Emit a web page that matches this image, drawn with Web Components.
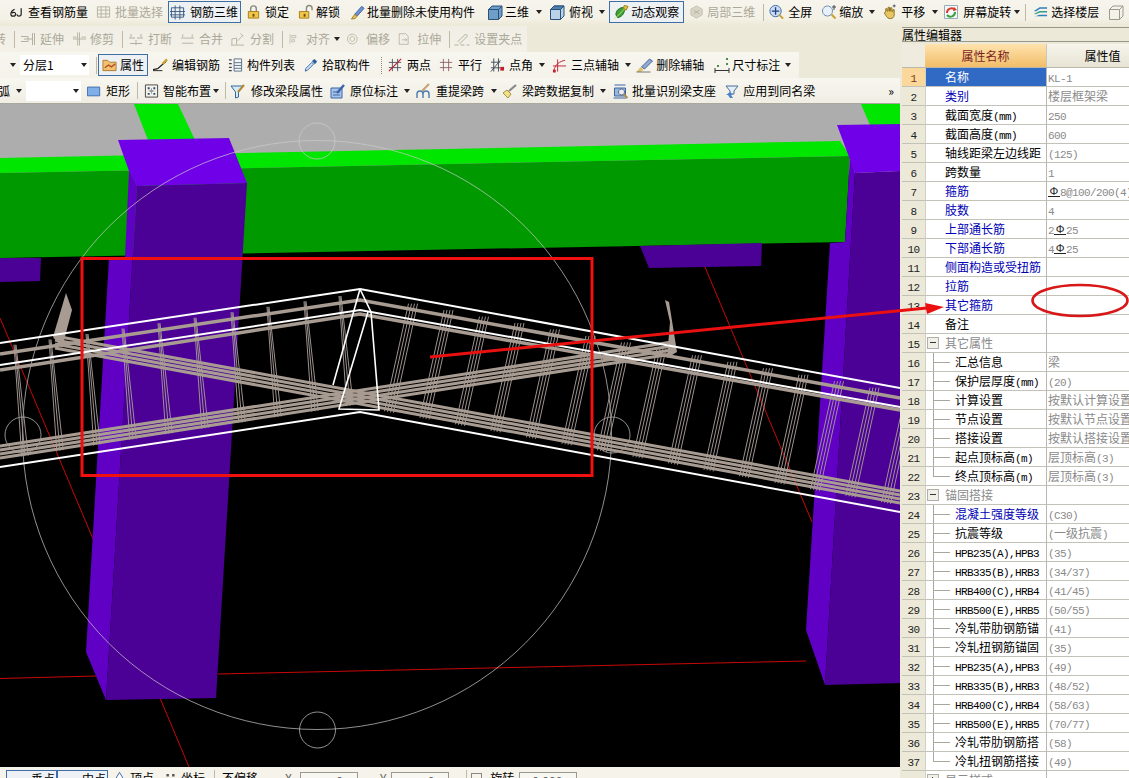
<!DOCTYPE html>
<html lang="zh">
<head>
<meta charset="utf-8">
<title>钢筋三维</title>
<style>
html, body { margin: 0; height: 100%; overflow: hidden; background: #ece9d8; }
body { font: 12px "Noto Sans CJK SC", "Liberation Sans", sans-serif; color: #000; }
</style>
</head>
<body>
<cad-app>
    <cad-toolbar slot="top" style="height:26px;padding-bottom:2px">
        <tool-btn icon="look" m="9" gap="4">查看钢筋量</tool-btn>
        <tool-btn icon="gridg" m="8" gap="4" disabled>批量选择</tool-btn>
        <tool-btn icon="bars3d" m="5" pl="2" pr="3" gap="5" active>钢筋三维</tool-btn>
        <tool-btn icon="lock" m="5" gap="4">锁定</tool-btn>
        <tool-btn icon="unlock" m="9" gap="3">解锁</tool-btn>
        <tool-btn icon="brush" m="10" gap="2">批量删除未使用构件</tool-btn>
        <tool-btn icon="cube" m="12" iw="16" gap="2" arrow="7">三维</tool-btn>
        <tool-btn icon="cubew" m="7" iw="16" gap="4" arrow="6">俯视</tool-btn>
        <tool-btn icon="orbit" m="4" pl="5" pr="5" gap="2" active>动态观察</tool-btn>
        <tool-btn icon="localg" m="5" gap="3" disabled>局部三维</tool-btn>
        <tool-sep m="8"></tool-sep>
        <tool-btn icon="full" m="5" gap="4">全屏</tool-btn>
        <tool-btn icon="zoom" m="9" iw="16" gap="2" arrow="6">缩放</tool-btn>
        <tool-btn icon="pan" m="7" gap="4" arrow="7">平移</tool-btn>
        <tool-btn icon="rotate" m="5" iw="16" gap="4" arrow="3">屏幕旋转</tool-btn>
        <tool-sep m="5"></tool-sep>
        <tool-btn icon="floors" m="7" gap="3">选择楼层</tool-btn>
        <tool-btn icon="cubeg" m="9" iw="16"></tool-btn>
    </cad-toolbar>

    <cad-toolbar slot="bars" class="bar2" style="height:26px">
        <tool-btn m="-6" disabled>转</tool-btn>
        <tool-sep m="8"></tool-sep>
        <tool-btn icon="extend" m="5" iw="16" gap="4" disabled>延伸</tool-btn>
        <tool-btn icon="trim" m="8" gap="3" disabled>修剪</tool-btn>
        <tool-sep m="8"></tool-sep>
        <tool-btn icon="cut" m="5" iw="16" gap="4" disabled>打断</tool-btn>
        <tool-btn icon="merge" m="8" gap="4" disabled>合并</tool-btn>
        <tool-btn icon="split" m="7" gap="5" disabled>分割</tool-btn>
        <tool-sep m="8"></tool-sep>
        <tool-btn icon="align" m="6" iw="11" gap="6" arrow="4" disabled>对齐</tool-btn>
        <tool-btn icon="offset" m="7" iw="13" gap="6" disabled>偏移</tool-btn>
        <tool-btn icon="stretch" m="8" iw="13" gap="6" disabled>拉伸</tool-btn>
        <tool-sep m="8"></tool-sep>
        <tool-btn icon="grip" m="3" iw="17" gap="4" disabled>设置夹点</tool-btn>
    </cad-toolbar>

    <cad-toolbar slot="bars" class="bar3" style="height:26px">
        <tool-arrow m="10"></tool-arrow>
        <cad-combo m="4" w="69">分层1</cad-combo>
        <tool-sep m="7"></tool-sep>
        <tool-btn icon="prop" m="1" pl="4" pr="4" gap="3" active>属性</tool-btn>
        <tool-btn icon="edit" m="5" gap="4">编辑钢筋</tool-btn>
        <tool-btn icon="list" m="8" gap="4">构件列表</tool-btn>
        <tool-btn icon="picker" m="9" iw="14" gap="4">拾取构件</tool-btn>
        <tool-sep m="11" dotted></tool-sep>
        <tool-btn icon="twopt" m="6" iw="14" gap="5">两点</tool-btn>
        <tool-btn icon="para" m="8" iw="14" gap="5">平行</tool-btn>
        <tool-btn icon="angle" m="8" gap="4" arrow="6">点角</tool-btn>
        <tool-btn icon="three" m="7" gap="4" arrow="6">三点辅轴</tool-btn>
        <tool-btn icon="delaxis" m="5" iw="17" gap="3">删除辅轴</tool-btn>
        <tool-btn icon="dim" m="9" iw="18" gap="1" arrow="5">尺寸标注</tool-btn>
    </cad-toolbar>

    <cad-toolbar slot="bars" class="bar4" style="height:26px">
        <tool-btn m="-2">弧</tool-btn>
        <tool-arrow m="6"></tool-arrow>
        <cad-combo m="4" w="55"></cad-combo>
        <tool-btn icon="rect" m="6" iw="14" gap="5">矩形</tool-btn>
        <tool-sep m="7"></tool-sep>
        <tool-btn icon="smart" m="6" gap="4" arrow="2">智能布置</tool-btn>
        <tool-sep m="6"></tool-sep>
        <tool-btn icon="funnel" m="4" iw="16" gap="5">修改梁段属性</tool-btn>
        <tool-btn icon="mark" m="7" iw="16" gap="4" arrow="6">原位标注</tool-btn>
        <tool-btn icon="lift" m="6" iw="16" gap="4" arrow="7">重提梁跨</tool-btn>
        <tool-btn icon="broom" m="5" iw="16" gap="4" arrow="6">梁跨数据复制</tool-btn>
        <tool-btn icon="batch" m="6" iw="17" gap="3">批量识别梁支座</tool-btn>
        <tool-btn icon="apply" m="7" iw="18" gap="2">应用到同名梁</tool-btn>
        <tool-btn m="auto" style="padding-right:6px">»</tool-btn>
    </cad-toolbar>

    <cad-viewport slot="view"></cad-viewport>
    <cad-statusbar slot="status"></cad-statusbar>

    <prop-panel slot="panel" title="属性编辑器">
        <prop-row n="1" kind="sel" name="名称" value="KL-1"></prop-row>
        <prop-row n="2" kind="link" name="类别" value="楼层框架梁"></prop-row>
        <prop-row n="3" name="截面宽度(mm)" value="250"></prop-row>
        <prop-row n="4" name="截面高度(mm)" value="600"></prop-row>
        <prop-row n="5" name="轴线距梁左边线距" value="(125)"></prop-row>
        <prop-row n="6" name="跨数量" value="1"></prop-row>
        <prop-row n="7" kind="link" name="箍筋" value="#8@100/200(4)"></prop-row>
        <prop-row n="8" kind="link" name="肢数" value="4"></prop-row>
        <prop-row n="9" kind="link" name="上部通长筋" value="2#25"></prop-row>
        <prop-row n="10" kind="link" name="下部通长筋" value="4#25"></prop-row>
        <prop-row n="11" kind="link" name="侧面构造或受扭筋"></prop-row>
        <prop-row n="12" kind="link" name="拉筋"></prop-row>
        <prop-row n="13" kind="link" name="其它箍筋"></prop-row>
        <prop-row n="14" name="备注"></prop-row>
        <prop-row n="15" kind="group" name="其它属性"></prop-row>
        <prop-row n="16" kind="sub" name="汇总信息" value="梁"></prop-row>
        <prop-row n="17" kind="sub" name="保护层厚度(mm)" value="(20)"></prop-row>
        <prop-row n="18" kind="sub" name="计算设置" value="按默认计算设置"></prop-row>
        <prop-row n="19" kind="sub" name="节点设置" value="按默认节点设置"></prop-row>
        <prop-row n="20" kind="sub" name="搭接设置" value="按默认搭接设置"></prop-row>
        <prop-row n="21" kind="sub" name="起点顶标高(m)" value="层顶标高(3)"></prop-row>
        <prop-row n="22" kind="sub last" name="终点顶标高(m)" value="层顶标高(3)"></prop-row>
        <prop-row n="23" kind="group" name="锚固搭接"></prop-row>
        <prop-row n="24" kind="sub link" name="混凝土强度等级" value="(C30)"></prop-row>
        <prop-row n="25" kind="sub" name="抗震等级" value="(一级抗震)"></prop-row>
        <prop-row n="26" kind="sub" name="HPB235(A),HPB3" value="(35)"></prop-row>
        <prop-row n="27" kind="sub" name="HRB335(B),HRB3" value="(34/37)"></prop-row>
        <prop-row n="28" kind="sub" name="HRB400(C),HRB4" value="(41/45)"></prop-row>
        <prop-row n="29" kind="sub" name="HRB500(E),HRB5" value="(50/55)"></prop-row>
        <prop-row n="30" kind="sub" name="冷轧带肋钢筋锚" value="(41)"></prop-row>
        <prop-row n="31" kind="sub" name="冷轧扭钢筋锚固" value="(35)"></prop-row>
        <prop-row n="32" kind="sub" name="HPB235(A),HPB3" value="(49)"></prop-row>
        <prop-row n="33" kind="sub" name="HRB335(B),HRB3" value="(48/52)"></prop-row>
        <prop-row n="34" kind="sub" name="HRB400(C),HRB4" value="(58/63)"></prop-row>
        <prop-row n="35" kind="sub" name="HRB500(E),HRB5" value="(70/77)"></prop-row>
        <prop-row n="36" kind="sub" name="冷轧带肋钢筋搭" value="(58)"></prop-row>
        <prop-row n="37" kind="sub last" name="冷轧扭钢筋搭接" value="(49)"></prop-row>
        <prop-row n="38" kind="group closed" name="显示样式"></prop-row>
    </prop-panel>
</cad-app>

<script>
// toolbar icons, 16x16
const g = (d) => `<path d="${d}" fill="none" stroke="#b5b1a1"/>`;
const s = (d, c = '#333', w = 1) => `<path d="${d}" fill="none" stroke="${c}" stroke-width="${w}"/>`;
const f = (d, c, o = 'none') => `<path d="${d}" fill="${c}" stroke="${o}"/>`;
const ICONS = {
    look: s('M6 5C4 6 2 8 2 10s1 2.500 2.500 2.500 2.500-1 2.500-2.500S5.500 8 3 9M13 4v6.500c0 1.500-1 2-2.500 2s-2-1-2-2', '#222', 1.3),
    gridg: g('M1.500 2.500h13v11h-13zM1.500 6h13M1.500 10h13M5.500 2.500v11M10.500 2.500v11'),
    bars3d: s('M1.500 3.500h13v10h-13zM0 7.500h16M0 11h16M5.500 1v15M10.500 1v15', '#3a5a80'),
    lock: s('M5 7V4.500a3 3 0 0 1 6 0V7', '#8a8a80', 1.5) + f('M2.500 7.500h11v7h-11z', '#f2c64a', '#a37d18') + f('M7 10h2v3H7z', '#6a4a08'),
    unlock: s('M9 7V4a3 3 0 0 1 6 0v2', '#8a8a80', 1.5) + f('M1.500 7.500h10v7h-10z', '#f2c64a', '#a37d18') + f('M6 10h2v3H6z', '#6a4a08'),
    brush: f('M5 10.500L12.500 2l2.500 2-7.500 8.500z', '#6f92d6', '#3d5f9e') + f('M5 10.500l2.500 2-2 2.500-4 .5z', '#e8c24a', '#9a8030'),
    cube: f('M1.500 5.500L5 2h10v10l-3.500 3.500h-10z', '#6f9fc8', '#2a5078') + s('M1.500 5.500h10v10M11.500 5.500L15 2', '#2a5078'),
    cubew: f('M1.500 5.500L5 2h10v10l-3.500 3.500h-10z', '#b9d2e8', '#2a5078') + f('M1.500 5.500L5 2h10l-3.500 3.500z', '#4f7fae', '#2a5078') + s('M11.500 5.500v10', '#2a5078'),
    orbit: f('M2 11C2 6 6 3 11 3c1 4-1 10-7 11z', '#3ca03a', '#1f6a1f') + f('M11 1l4 1-2 4-3-2z', '#e6c22e', '#9a8020') + s('M1 15L11 5', '#c9e65a'),
    localg: f('M8 1.500l6 3.500v6l-6 3.500L2 11V5z', '#d9d6c8', '#c2bfb0') + g('M5 6l6 4M11 6l-6 4'),
    full: f('M7 1a6 6 0 1 1-.01 0z', '#cbdcf2', '#3a66a8') + s('M7 3v8M3 7h8', '#1f3f80', 1.4) + s('M11 11l4 4', '#c9a02c', 2),
    zoom: f('M6.500 2a5 5 0 1 1-.01 0z', '#e8f0fa', '#6c8cb4') + s('M10.500 10.500l4 4', '#c9a02c', 2) + s('M13 1v5M11 3h4', '#445'),
    pan: f('M4 8V4.500h1.500V7h1V3H8v4h1V3.500h1.500V7.500h1V5.500H13V11c0 2.500-1.500 4-4 4s-3.500-1-5-3.500L2.500 9l1-1z', '#e8c662', '#8c7020') + s('M13 0v3M11.500 1.500h3', '#445'),
    rotate: f('M1.500 1.500h13v13h-13z', '#f4f6fa', '#9ab') + s('M4 9a4.500 4.500 0 0 1 8-3', '#d83a2a', 2) + s('M12 8a4.500 4.500 0 0 1-8 3', '#3ca03a', 2) + f('M11 3l3 3-4 1z', '#d83a2a'),
    floors: f('M1 7l6-4h8v1.500H7.500L3 7.500z', '#2f7fc0') + f('M1 10l6-3h8v1.500H7.500L3 10.500z', '#2f9f8a') + f('M1 13l6-2h8v1.500H3z', '#2f7fc0'),
    cubeg: s('M1.500 5.500L5 2h10v10l-3.500 3.500h-10zM1.500 5.500h10v10M11.500 5.500L15 2', '#9a9a90'),
    extend: g('M1 5.500h7v5H1M4 8h8M14.500 2v12M12.500 2v12'),
    trim: g('M8 1v14M6 1v14M1 8h14M1 6h4M10 6h5'),
    cut: g('M1 7h6M9 7h6M2 12.500h12M3 3v3M13 3v3M8 9v5'),
    merge: g('M1 7h14M2 12.500h12M3 3v3M13 3v3'),
    split: g('M1 14.500h14M2 14V8l5-1v7M8 10l6-6M11 2l3 3'),
    align: g('M1.500 1v14M4 3h6v3H4zM4 9h4v3H4z'),
    offset: g('M6.500 2a6 6 0 1 1-.01 0zM6.500 5a3 3 0 1 1-.01 0z'),
    stretch: g('M1.500 1.500h8l3 3v10h-11zM5 9h6M9 7l2 2-2 2'),
    grip: g('M1 14h4M7 14h4M13 14h3M4 11l8-8 2 2-8 8'),
    prop: f('M1 3h5l2 2h7v9H1z', '#f2c070', '#a87c30') + s('M3 11l4-3 3 2 4-3', '#b04a20', 1.4),
    edit: s('M0 13l5-1 9-8', '#222', 1.4) + s('M10 7l5-5', '#c9a02c', 2.4) + s('M0 14h10', '#222'),
    list: s('M1 2.500h3M1 6.500h3M1 10.500h3M1 14h3', '#444', 1.3) + f('M6.500 1.500h8v13h-8z', '#f6f6f2', '#55708c') + s('M6.500 5.500h8M6.500 8.500h8M6.500 11.500h8', '#55708c'),
    picker: f('M2 12L9 5l2 2-7 7-2.500 1z', '#cfe2f6', '#2e5ea0') + f('M9 3.500L12 1l3 3-2.500 3z', '#2e5ea0'),
    twopt: s('M1 5h14M1 11h14M5 1v14M11 1v14', '#404a58') + s('M1 15L15 1', '#c02030', 1.4),
    para: s('M1 5h14M1 11h14M5 1v14M11 1v14', '#8a5a60'),
    angle: s('M1 5h10M1 11h10M4 1v14M9 1v14M1 15L11 3', '#404a58') + f('M11 10h4v4h-4z', '#c02030'),
    three: s('M1 9h14M6 2v13', '#c02030') + s('M2 14C3 8 8 4 14 3', '#c02030') + f('M1 13h3v3H1z', '#c02030'),
    delaxis: f('M5 10L13 2l3 2-8 8z', '#8fa8d4', '#4a6a9e') + f('M4 10l3 3-3 2H0z', '#e0c060') + s('M0 15h14', '#777'),
    dim: s('M1 11v5M15 11v5M1 13.500h14', '#333') + f('M3 8h2v2H3zM12 1h2v2h-2zM12 6h2v2h-2z', '#4a8a4a'),
    rect: f('M.5 3.500h14v10H.5z', '#7faee8', '#3a64a8'),
    smart: s('M1.500 1.500h13v13h-13z', '#444') + f('M4 4h2v2H4zM10 4h2v2h-2zM4 10h2v2H4zM10 10h2v2h-2zM7 7h2v2H7z', '#2b4a7a') + s('M5 8h6M8 5v6', '#999'),
    funnel: f('M1 3h12L8.500 9v5l-3 1V9z', '#dce8f4', '#2e6aa0') + s('M8 9l6-7', '#b08a30', 2),
    mark: f('M1 5h11v10H1z', '#a8c4ea', '#3a64a8') + s('M3 9h7M3 12h7', '#3a64a8') + s('M7 10l7-8', '#3a64a8', 2.4),
    lift: s('M1 15v-4a3 3 0 0 1 6 0v4M7 15v-4a3 3 0 0 1 6 0v4', '#4a7ab0', 1.4) + s('M6 8l7-7', '#c8a070', 2),
    broom: f('M1 10l4-3 4 4-3 4z', '#f2e08a', '#a8923a') + s('M7 8l7-6', '#888', 2.2),
    batch: f('M2 5h11v8H2z', '#9ab8d8', '#3a64a8') + s('M2 2h11M1 15h13', '#3a64a8') + f('M9 6a3 3 0 1 1-.01 0z', '#e8eef8', '#667') + s('M11 11l4 4', '#a89050', 2),
    apply: f('M2 3h12l-4 5v3H6V8z', '#e4eef8', '#4a6f9a') + f('M6 9l3 3h-2l2 3h-3l-2-3H2z', '#4a80c8')
};

const ico = (name, w) => `<svg width="${w}" height="16" viewBox="0 0 16 16" preserveAspectRatio="xMidYMid meet">${ICONS[name] || ''}</svg>`;
const caret = `<span class="caret"></span>`;

class CadApp extends HTMLElement {
    connectedCallback() {
        this.attachShadow({ mode: 'open' });
        this.shadowRoot.innerHTML = `
            <style>
                :host { display: block; position: relative; width: 1129px; height: 778px; overflow: hidden; background: #ece9d8; }
                .main { display: flex; height: 752px; }
                .left { display: flex; flex-direction: column; width: 900px; flex: none; }
                svg { position: absolute; left: 0; top: 0; pointer-events: none; }
            </style>
            <slot name="top"></slot>
            <div class="main">
                <div class="left">
                    <slot name="bars"></slot>
                    <slot name="view"></slot>
                    <slot name="status"></slot>
                </div>
                <slot name="panel"></slot>
            </div>
            <svg width="1129" height="778">
                <path d="M430 357L927 308" stroke="#ea1010" stroke-width="3" fill="none"/>
                <path d="M944 307L925 303L927 314z" fill="#ea1010"/>
                <ellipse cx="1080" cy="300.500" rx="47.500" ry="15.500" fill="none" stroke="#d81818" stroke-width="2.600"/>
            </svg>
        `;
    }
}

class CadToolbar extends HTMLElement {
    connectedCallback() {
        this.attachShadow({ mode: 'open' });
        this.shadowRoot.innerHTML = `
            <style>
                :host { display: flex; align-items: center; box-sizing: border-box; flex: none; white-space: nowrap; overflow: hidden;
                    background: linear-gradient(#f6f4ec, #f4f1e6 70%, #ece9d8); }
                :host(.bar2) { width: 527px; background: linear-gradient(#f1efe5, #f3f1e8); }
                :host(.bar3) { width: 799px; background: linear-gradient(#f7f6ef, #f4f2e9); }
                :host(.bar4) { border-bottom: 1px solid #a9a89f; background: linear-gradient(#f7f6f0, #f0eee3); }
            </style>
            <slot></slot>
        `;
    }
}

class ToolBtn extends HTMLElement {
    connectedCallback() {
        this.attachShadow({ mode: 'open' });
        const iw = this.getAttribute('iw') || 15;
        const icon = this.getAttribute('icon');
        const m = this.getAttribute('m') || 0;
        const active = this.hasAttribute('active');
        this.style.marginLeft = m === 'auto' ? 'auto' : m + 'px';
        this.shadowRoot.innerHTML = `
            <style>
                :host { display: inline-flex; align-items: center; flex: none; line-height: 16px; }
                :host([disabled]) { color: #aca899; }
                .b { display: inline-flex; align-items: center; box-sizing: border-box; }
                :host([active]) .b { height: 22px; border: 1px solid #3d6ea8; background: #eef1f4; }
                svg { display: block; flex: none; }
                .t { margin-left: ${icon ? (this.getAttribute('gap') || 0) : 0}px; }
                .caret { width: 0; height: 0; border: 3px solid transparent; border-top: 4px solid #222; border-bottom: 0; margin-left: ${this.getAttribute('arrow')}px; }
            </style>
            <span class="b" style="${active ? `padding:0 ${this.getAttribute('pr') - 1}px 0 ${this.getAttribute('pl') - 1}px` : ''}">
                ${icon ? ico(icon, iw) : ''}<span class="t"><slot></slot></span>
            </span>${this.hasAttribute('arrow') ? caret : ''}
        `;
    }
}

class ToolArrow extends HTMLElement {
    connectedCallback() {
        this.attachShadow({ mode: 'open' });
        this.style.marginLeft = (this.getAttribute('m') || 0) + 'px';
        this.shadowRoot.innerHTML = `
            <style>
                :host { display: block; flex: none; width: 0; height: 0; border: 3px solid transparent; border-top: 4px solid #222; border-bottom: 0; }
            </style>
        `;
    }
}

class ToolSep extends HTMLElement {
    connectedCallback() {
        this.attachShadow({ mode: 'open' });
        this.style.marginLeft = (this.getAttribute('m') || 0) + 'px';
        this.shadowRoot.innerHTML = `
            <style>
                :host { display: block; flex: none; width: 1px; height: 17px; background: #bdbaa8; }
                :host([dotted]) { background: none; border-left: 1px dotted #8e8c80; box-sizing: border-box; }
            </style>
        `;
    }
}

class CadCombo extends HTMLElement {
    connectedCallback() {
        this.attachShadow({ mode: 'open' });
        this.style.marginLeft = (this.getAttribute('m') || 0) + 'px';
        this.style.width = this.getAttribute('w') + 'px';
        this.shadowRoot.innerHTML = `
            <style>
                :host { display: flex; align-items: center; flex: none; box-sizing: border-box; height: 20px; padding: 0 2px 0 3px; background: #fff; }
                .t { flex: 1; line-height: 16px; }
                .caret { width: 0; height: 0; border: 3px solid transparent; border-top: 4px solid #222; border-bottom: 0; }
            </style>
            <span class="t"><slot></slot></span>${caret}
        `;
    }
}

// the model view: columns, beam and the rebar cage, drawn in screen coordinates
class CadViewport extends HTMLElement {
    connectedCallback() {
        this.attachShadow({ mode: 'open' });
        const bar = '#a89c92';
        const tie = '#9d928f';
        const ln = (x1, y1, x2, y2, c, w) => `<line x1="${x1}" y1="${y1}" x2="${x2}" y2="${y2}" stroke="${c}" stroke-width="${w}"/>`;
        let cage = '';

        // stirrups left of the peak
        for (const x of [15, 50, 87, 123, 159, 195, 232, 268, 305, 340]) {
            const ty = 354 - 0.15 * x - 7;
            for (const o of [-2, 0, 2]) {
                const xb = x + 10 + o * 1.6;
                cage += ln(x + o * 0.5, ty, xb, 452 - 0.155 * xb + 8, tie, 1);
            }
        }
        // stirrups right of the peak
        for (let x = 413; x < 930; x += 35.500) {
            const ty = 300 + 0.182 * (x - 360) - 6;
            for (const o of [-4.500, -1.500, 1.500, 4.500]) {
                const xb = x - 24 + o;
                cage += ln(x + o, ty, xb, 342 + 0.183 * (xb - 55) + 9, tie, 1);
            }
        }
        // bottom bar bundles, crossing at the peak
        for (const o of [-6, -2, 2, 6]) {
            cage += ln(0, 452 + o, 672, 348 + o, bar, 3);
            cage += ln(55, 342 + o, 900, 497 + o, bar, 3);
        }
        // top bars and hooks
        cage += `<polyline points="0,354 360,300 900,398" fill="none" stroke="${bar}" stroke-width="3.500"/>`;
        cage += `<polyline points="0,370 360,314 900,410" fill="none" stroke="${bar}" stroke-width="3.500"/>`;
        cage += `<path d="M66 293L72 310 62 348 53 337z" fill="${bar}"/><path d="M665 300L669 302 677 352 667 358 670 322z" fill="${bar}"/>`;
        // white wireframe of the beam
        cage += `<g fill="none" stroke="#fff" stroke-width="2">
            <polyline points="0,343 360,289 900,388"/>
            <polyline points="0,365 360,310 900,407"/>
            <polyline points="0,467 360,412 900,512"/>
            <path stroke-width="1.600" d="M360 289L333 385M360 289L371 312 379 410 339 409 368 312"/>
        </g>`;

        this.shadowRoot.innerHTML = `
            <style>
                :host { display: block; flex: 1; min-height: 0; background: #000; overflow: hidden; }
                svg { display: block; }
            </style>
            <svg width="900" height="663" viewBox="0 104 900 663">
                <rect x="0" y="104" width="900" height="70" fill="#adadad"/>
                <path d="M134 104H178L195 140H148z" fill="#00e600"/>
                <path d="M861 104H900V125H870z" fill="#00e600"/>
                <path d="M0 158L840 141 850 156 0 173z" fill="#00e600"/>
                <path d="M0 173L850 156 845 242 0 258z" fill="#009900"/>
                <path d="M0 258H41L40 281 0 282z" fill="#4b0096"/>
                <path d="M640 246L762 243 761 266 649 268z" fill="#4b0096"/>

                <g fill="none" stroke="#c80808" stroke-width="1">
                    <path d="M0 318L189 767"/>
                    <path d="M705 267L812 522"/>
                    <path d="M0 678.500L96 676M218 674L806 661"/>
                </g>

                <path d="M129 171L137 186 106 700 86 652 109 258 125 258z" fill="#5f00c4"/>
                <path d="M137 186L247 183 216 698 106 700z" fill="#4b0096"/>
                <path d="M118 140L229 138 247 183 137 186 129 171z" fill="#7000e8"/>

                <path d="M850 156L855 173 825 685 806 630 830 243 845 242z" fill="#5f00c4"/>
                <path d="M855 173L900 171V683L825 685z" fill="#4b0096"/>
                <path d="M837 125L900 124V171L855 173z" fill="#7000e8"/>

                <g fill="none" stroke="#ccc" stroke-opacity=".7" stroke-width="1">
                    <circle cx="317" cy="435" r="294.500"/>
                    <circle cx="317" cy="141" r="18"/>
                    <circle cx="317.500" cy="730" r="18"/>
                    <circle cx="23" cy="435" r="18"/>
                    <circle cx="612" cy="435" r="18"/>
                </g>

                ${cage}

                <rect x="82" y="258.500" width="510" height="217" fill="none" stroke="#f01010" stroke-width="3"/>
            </svg>
        `;
    }
}

class CadStatusbar extends HTMLElement {
    connectedCallback() {
        this.attachShadow({ mode: 'open' });
        this.shadowRoot.innerHTML = `
            <style>
                :host { display: flex; align-items: flex-start; flex: none; height: 11px; overflow: hidden; padding-top: 3px; box-sizing: border-box; background: #f5f3ea; line-height: 16px; white-space: nowrap; }
                .on { box-sizing: border-box; width: 51px; height: 22px; padding-left: 24px; border: 1px solid #3d6ea8; background: #eef1f6; flex: none; }
                .inp { box-sizing: border-box; width: 58px; height: 20px; margin-top: 2px; border: 1px solid #9a9a92; background: #f8f7f2; text-align: right; padding-right: 14px; color: #666; flex: none; }
                .sep { width: 1px; height: 18px; background: #bdbaa8; flex: none; }
                .chk { width: 11px; height: 11px; margin-top: 3px; border: 1px solid #888; box-sizing: border-box; flex: none; }
                span { flex: none; }
            </style>
            <div class="on" style="margin-left:6px">垂点</div>
            <div class="on">中点</div>
            <svg style="margin-left:4px;flex:none" width="15" height="16" viewBox="0 0 16 16"><path d="M8 2L14 12H2z" fill="#fff" stroke="#3a64a8"/></svg>
            <span style="margin-left:3px">顶点</span>
            <svg style="margin-left:10px;flex:none" width="13" height="16" viewBox="0 0 16 16"><path d="M3 3h3v3H3zM10 3h3v3h-3z" fill="#555"/></svg>
            <span style="margin-left:4px">坐标</span>
            <div class="sep" style="margin-left:9px"></div>
            <span style="margin-left:7px">不偏移</span>
            <span style="margin-left:27px;color:#666">X</span>
            <div class="inp" style="margin-left:8px">0</div>
            <span style="margin-left:22px;color:#666">Y</span>
            <div class="inp" style="margin-left:5px">0</div>
            <div class="sep" style="margin-left:17px"></div>
            <div class="chk" style="margin-left:4px"></div>
            <span style="margin-left:8px">旋转</span>
            <div class="inp" style="margin-left:5px">0.000</div>
        `;
    }
}

class PropPanel extends HTMLElement {
    connectedCallback() {
        this.attachShadow({ mode: 'open' });
        this.shadowRoot.innerHTML = `
            <style>
                :host { display: flex; flex-direction: column; flex: none; box-sizing: border-box; width: 229px; height: 752px; padding: 1px 0 0 2px; overflow: hidden; background: #ece9d8; }
                .title { height: 15px; box-sizing: border-box; border-top: 1px solid #99978a; border-bottom: 1px solid #99978a; line-height: 13px; flex: none; overflow: hidden; }
                .head { display: grid; grid-template-columns: 23px 121px 112px; height: 24px; margin-top: 2px; flex: none; border-bottom: 1px solid #b8b7ae; box-sizing: border-box; line-height: 23px; text-align: center; }
                .head div:nth-child(1) { background: #efecdf; }
                .head div:nth-child(2) { background: linear-gradient(#ffe3ae, #f2bd69); color: #7a1f1f; }
                .head div:nth-child(3) { background: linear-gradient(#f7f5ec, #e7e4d4); border-left: 1px solid #c8c7bc; }
            </style>
            <div class="title">${this.getAttribute('title')}</div>
            <div class="head"><div></div><div>属性名称</div><div>属性值</div></div>
            <slot></slot>
        `;
    }
}

// latin runs in the grid are half-width, six pixels a character
const latin = (t) => t
    .replace(/[A-Za-z0-9()\/,@.\-]+/g, (m) => `<span class="l">${m}</span>`)
    .replace(/#/g, '<span class="rb">Φ</span>');

class PropRow extends HTMLElement {
    connectedCallback() {
        this.attachShadow({ mode: 'open' });
        const kind = (this.getAttribute('kind') || '').split(' ');
        const name = this.getAttribute('name');
        const value = this.getAttribute('value') || '';
        const classes = kind.join(' ');
        this.shadowRoot.innerHTML = `
            <style>
                :host { display: block; flex: none; }
                .row { display: grid; grid-template-columns: 23px 121px 112px; height: 19px; line-height: 18px; white-space: nowrap; }
                .row > div { box-sizing: border-box; border-bottom: 1px solid #c3c2b9; overflow: hidden; }
                .n { background: #ece9d8; text-align: center; color: #222; }
                .name { position: relative; background: #fff; padding-left: 19px; border-left: 1px solid #d0cfc6; }
                .val { background: #fff; border-left: 1px solid #b9b8ae; padding-left: 1px; color: #8a8a8a; }
                .l { font: 11px/18px "Liberation Mono", monospace; letter-spacing: -0.600px; }
                .rb { display: inline-block; width: 12px; text-align: center; font: 11px/11px "Liberation Sans", sans-serif; color: #222; border-bottom: 1px solid #222; vertical-align: 1px; height: 10px; }
                .link .name { color: #0000b4; }
                .sub .name { padding-left: 29px; }
                .group .name { color: #8a8a8a; }
                .sel .n { background: #fbd79c; color: #7a3a10; }
                .sel .name { background: #316ac5; color: #fff; }
                .sub .name::before { content: ""; position: absolute; left: 7px; top: 0; height: 19px; border-left: 1px solid #a8a8a0; }
                .last .name::before { height: 9px; }
                .sub .name::after { content: ""; position: absolute; left: 7px; width: 17px; top: 9px; border-top: 1px solid #a8a8a0; }
                .box { position: absolute; left: 1px; top: 3px; width: 12px; height: 12px; box-sizing: border-box; border: 1px solid #b0b0a8; background: #f0efe8; }
                .box::before { content: ""; position: absolute; left: 2px; right: 2px; top: 4px; border-top: 1px solid #333; }
                .closed .box::after { content: ""; position: absolute; top: 2px; bottom: 2px; left: 4px; border-left: 1px solid #333; }
            </style>
            <div class="row ${classes}">
                <div class="n"><span class="l">${this.getAttribute('n')}</span></div>
                <div class="name">${kind.includes('group') ? '<span class="box"></span>' : ''}${latin(name)}</div>
                <div class="val">${latin(value)}</div>
            </div>
        `;
    }
}

customElements.define('cad-app', CadApp);
customElements.define('cad-toolbar', CadToolbar);
customElements.define('tool-btn', ToolBtn);
customElements.define('tool-arrow', ToolArrow);
customElements.define('tool-sep', ToolSep);
customElements.define('cad-combo', CadCombo);
customElements.define('cad-viewport', CadViewport);
customElements.define('cad-statusbar', CadStatusbar);
customElements.define('prop-panel', PropPanel);
customElements.define('prop-row', PropRow);
</script>
</body>
</html>
